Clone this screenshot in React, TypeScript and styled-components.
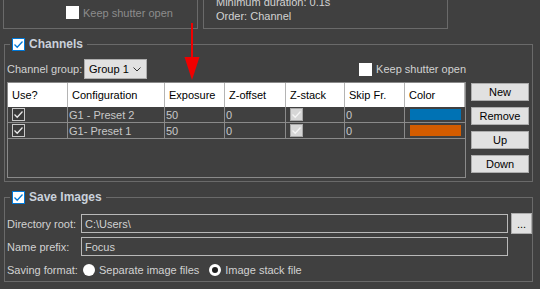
import styled, { createGlobalStyle } from "styled-components";

const GlobalStyle = createGlobalStyle`
  html, body {
    margin: 0;
    padding: 0;
    background: #404040;
  }
  body {
    font-family: "Liberation Sans", Arial, sans-serif;
    font-size: 11px;
    color: #d2d2d2;
  }
`;

const Page = styled.div`
  position: relative;
  width: 540px;
  height: 289px;
  overflow: hidden;
  background: #404040;
`;

const TopRow = styled.div`
  display: flex;
  gap: 5px;
  padding-left: 3px;
  height: 29px;
`;

const TopBox = styled.div<{ $width: number }>`
  width: ${(p) => p.$width}px;
  height: 29px;
  box-sizing: border-box;
  border: 1px solid #6a6a6a;
  border-top: none;
  overflow: hidden;
`;

const ShutterTop = styled.div`
  display: flex;
  align-items: center;
  gap: 4px;
  padding: 6px 0 0 62px;
  color: #8c8c8c;
`;

const InfoText = styled.div`
  margin-top: -5px;
  padding-left: 12px;
  line-height: 14px;
  color: #d2d2d2;
`;

const GroupBox = styled.fieldset<{ $top: number }>`
  margin: ${(p) => p.$top}px 7px 0 4px;
  padding: 0 2px 3px 2px;
  border: 1px solid #6a6a6a;
  min-width: 0;
`;

const GroupTitle = styled.legend`
  margin-left: 3px;
  padding: 0 4px 0 2px;
  display: flex;
  align-items: center;
  gap: 4px;
  height: 14px;
  font-size: 12px;
  font-weight: bold;
  color: #cad1db;
`;

const Box = styled.span<{ $tone: "blue" | "white" | "dark" | "light" }>`
  display: inline-flex;
  align-items: center;
  justify-content: center;
  width: 13px;
  height: 13px;
  box-sizing: border-box;
  flex-shrink: 0;
  border: 1px solid
    ${(p) =>
      p.$tone === "blue"
        ? "#0078d7"
        : p.$tone === "dark"
        ? "#c8c8c8"
        : p.$tone === "light"
        ? "#a8a8a8"
        : "#ffffff"};
  background: ${(p) =>
    p.$tone === "dark" ? "#3a3a3a" : p.$tone === "light" ? "#d6d6d6" : "#ffffff"};
`;

const checkColor = {
  blue: "#0078d7",
  white: "#000",
  dark: "#e8e8e8",
  light: "#f4f4f4",
};

const CheckBox = ({
  tone,
  checked,
}: {
  tone: "blue" | "white" | "dark" | "light";
  checked?: boolean;
}) => (
  <Box $tone={tone}>
    {checked && (
      <svg width="11" height="11" viewBox="0 0 11 11">
        <path
          d="M1.5 5.5 L4.2 8.2 L9.5 2.5"
          fill="none"
          stroke={checkColor[tone]}
          strokeWidth="1.3"
        />
      </svg>
    )}
  </Box>
);

const ChannelsBody = styled.div`
  margin-top: 8px;
`;

const ControlRow = styled.div`
  display: flex;
  align-items: center;
  height: 20px;
`;

const FieldLabel = styled.span<{ $width: number }>`
  width: ${(p) => p.$width}px;
  flex-shrink: 0;
  white-space: nowrap;
  color: #d2d2d2;
`;

const Combo = styled.div`
  display: flex;
  align-items: center;
  justify-content: space-between;
  width: 63px;
  height: 20px;
  box-sizing: border-box;
  padding: 0 5px 0 4px;
  background: #e1e1e1;
  border: 1px solid #adadad;
  color: #000;
`;

const CheckLabel = styled.label`
  display: flex;
  align-items: center;
  gap: 4px;
  margin-left: auto;
  margin-right: 64px;
  color: #d2d2d2;
`;

const TableRow = styled.div`
  display: flex;
  gap: 5px;
  margin-top: 3px;
`;

const Grid = styled.div`
  display: grid;
  grid-template-columns: 60px 97px 60px 61px 59px 60px 60px;
  grid-template-rows: 24px 16px 16px;
  align-content: start;
  width: 459px;
  height: 96px;
  box-sizing: border-box;
  border: 1px solid #8a8a8a;
`;

const HeadCell = styled.div`
  display: flex;
  align-items: center;
  padding-left: 4px;
  background: #ffffff;
  color: #000;
  border-right: 1px solid #b4b4b4;
  &:last-child {
    border-right: none;
  }
`;

const Cell = styled.div`
  display: flex;
  align-items: center;
  padding-left: 1px;
  box-sizing: border-box;
  border-right: 1px solid #8a8a8a;
  border-bottom: 1px solid #8a8a8a;
  color: #c8c8c8;
  &:nth-child(7n) {
    border-right: none;
  }
`;

const CheckCell = styled(Cell)`
  padding-left: 4px;
`;

const ColorCell = styled(Cell)`
  padding: 2px 4px 2px 5px;
`;

const Swatch = styled.div<{ $color: string }>`
  width: 100%;
  height: 100%;
  background: ${(p) => p.$color};
`;

const ButtonColumn = styled.div`
  display: flex;
  flex-direction: column;
  gap: 6px;
  padding-top: 1px;
`;

const Button = styled.button<{ $width?: number; $height?: number }>`
  width: ${(p) => p.$width ?? 58}px;
  height: ${(p) => p.$height ?? 18}px;
  padding: 0;
  box-sizing: border-box;
  background: #e1e1e1;
  border: 1px solid #adadad;
  font-family: "Liberation Sans", Arial, sans-serif;
  font-size: 11px;
  color: #000;
`;

const SaveBody = styled.div`
  margin-top: 9px;
  padding-bottom: 1px;
`;

const FormGrid = styled.div`
  display: grid;
  grid-template-columns: 71px 427px 21px;
  grid-template-rows: 21px 19px;
  column-gap: 3px;
  row-gap: 3px;
  align-items: center;
`;

const TextField = styled.input`
  width: 100%;
  height: 19px;
  box-sizing: border-box;
  margin: 0;
  padding: 0 3px;
  background: transparent;
  border: 1px solid #b9b9b9;
  outline: none;
  font-family: "Liberation Sans", Arial, sans-serif;
  font-size: 11px;
  color: #d2d2d2;
`;

const FormatRow = styled.div`
  display: flex;
  align-items: center;
  height: 15px;
  margin-top: 6px;
`;

const RadioLabel = styled.label<{ $gap: number }>`
  display: flex;
  align-items: center;
  gap: 4px;
  margin-right: ${(p) => p.$gap}px;
  color: #d2d2d2;
`;

const Radio = styled.span<{ $checked?: boolean }>`
  width: 12px;
  height: 12px;
  box-sizing: border-box;
  border-radius: 50%;
  background: ${(p) => (p.$checked ? "#1e1e1e" : "#ffffff")};
  border: ${(p) => (p.$checked ? "3px solid #ffffff" : "none")};
`;

const Arrow = styled.svg`
  position: absolute;
  left: 183px;
  top: 23px;
`;

const headers = ["Use?", "Configuration", "Exposure", "Z-offset", "Z-stack", "Skip Fr.", "Color"];

const channels = [
  { name: "G1 - Preset 2", exposure: "50", offset: "0", skip: "0", color: "#0072b4" },
  { name: "G1- Preset 1", exposure: "50", offset: "0", skip: "0", color: "#d35c00" },
];

export default function App() {
  return (
    <Page>
      <GlobalStyle />
      <TopRow>
        <TopBox $width={195}>
          <ShutterTop>
            <CheckBox tone="white" />
            <span>Keep shutter open</span>
          </ShutterTop>
        </TopBox>
        <TopBox $width={245}>
          <InfoText>
            Minimum duration: 0.1s
            <br />
            Order: Channel
          </InfoText>
        </TopBox>
      </TopRow>

      <GroupBox $top={8}>
        <GroupTitle>
          <CheckBox tone="blue" checked />
          Channels
        </GroupTitle>
        <ChannelsBody>
          <ControlRow>
            <FieldLabel $width={77}>Channel group:</FieldLabel>
            <Combo>
              <span>Group 1</span>
              <svg width="8" height="5" viewBox="0 0 8 5">
                <polyline points="0.5,0.5 4,4 7.5,0.5" fill="none" stroke="#333" />
              </svg>
            </Combo>
            <CheckLabel>
              <CheckBox tone="white" />
              Keep shutter open
            </CheckLabel>
          </ControlRow>
          <TableRow>
            <Grid>
              {headers.map((h) => (
                <HeadCell key={h}>{h}</HeadCell>
              ))}
              {channels.map((c) => [
                <CheckCell key={c.name + "use"}>
                  <CheckBox tone="dark" checked />
                </CheckCell>,
                <Cell key={c.name + "name"}>{c.name}</Cell>,
                <Cell key={c.name + "exp"}>{c.exposure}</Cell>,
                <Cell key={c.name + "off"}>{c.offset}</Cell>,
                <CheckCell key={c.name + "stack"}>
                  <CheckBox tone="light" checked />
                </CheckCell>,
                <Cell key={c.name + "skip"}>{c.skip}</Cell>,
                <ColorCell key={c.name + "color"}>
                  <Swatch $color={c.color} />
                </ColorCell>,
              ])}
            </Grid>
            <ButtonColumn>
              <Button>New</Button>
              <Button>Remove</Button>
              <Button>Up</Button>
              <Button>Down</Button>
            </ButtonColumn>
          </TableRow>
        </ChannelsBody>
      </GroupBox>

      <GroupBox $top={8}>
        <GroupTitle>
          <CheckBox tone="blue" checked />
          Save Images
        </GroupTitle>
        <SaveBody>
          <FormGrid>
            <FieldLabel $width={71}>Directory root:</FieldLabel>
            <TextField readOnly defaultValue="C:\Users\" />
            <Button $width={21} $height={21}>...</Button>
            <FieldLabel $width={71}>Name prefix:</FieldLabel>
            <TextField readOnly defaultValue="Focus" />
          </FormGrid>
          <FormatRow>
            <FieldLabel $width={76}>Saving format:</FieldLabel>
            <RadioLabel $gap={10}>
              <Radio />
              Separate image files
            </RadioLabel>
            <RadioLabel $gap={0}>
              <Radio $checked />
              Image stack file
            </RadioLabel>
          </FormatRow>
        </SaveBody>
      </GroupBox>

      <Arrow width="18" height="58" viewBox="0 0 18 58">
        <line x1="9" y1="0" x2="9" y2="36" stroke="#f00000" strokeWidth="2" />
        <polygon points="1.5,34 16.5,34 9,57" fill="#f00000" />
      </Arrow>
    </Page>
  );
}
